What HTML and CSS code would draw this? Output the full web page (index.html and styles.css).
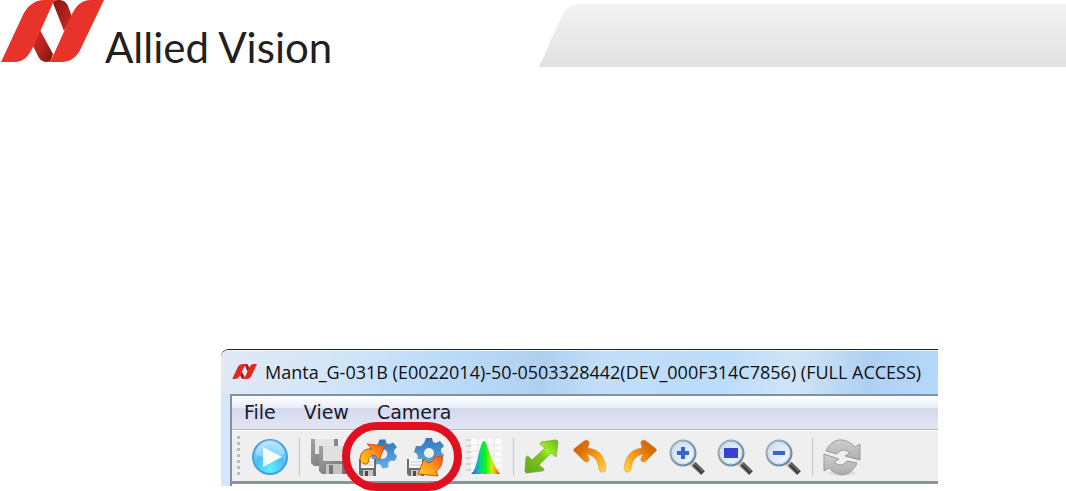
FILE: index.html
```html
<!DOCTYPE html>
<html lang="en">
<head>
  <meta charset="UTF-8" />
  <meta name="viewport" content="width=device-width, initial-scale=1.0"/>
  <title>Allied Vision</title>
  <link rel="stylesheet" href="styles.css">
</head>
<body>
  <!-- shared gradients and shapes for the toolbar icons -->
  <svg class="defs" width="0" height="0" aria-hidden="true">
    <defs>
      <radialGradient id="play" cx="50%" cy="85%" r="85%">
        <stop offset="0" stop-color="#5ff0ff"/><stop offset=".5" stop-color="#4cc0f6"/><stop offset="1" stop-color="#a5dcfa"/>
      </radialGradient>
      <linearGradient id="gear" x1="0" y1="0" x2="0" y2="1">
        <stop offset="0" stop-color="#2f77bd"/><stop offset="1" stop-color="#68aee8"/>
      </linearGradient>
      <linearGradient id="fire" x1="0" y1="1" x2="1" y2="0">
        <stop offset="0" stop-color="#ffd21c"/><stop offset=".5" stop-color="#ff9a1c"/><stop offset="1" stop-color="#f4511c"/>
      </linearGradient>
      <linearGradient id="rainbow">
        <stop offset="0" stop-color="#2a35c8"/><stop offset=".17" stop-color="#1a9ae0"/><stop offset=".35" stop-color="#00e070"/>
        <stop offset=".5" stop-color="#12f01c"/><stop offset=".72" stop-color="#d0ee10"/><stop offset=".85" stop-color="#ffa010"/><stop offset="1" stop-color="#b03020"/>
      </linearGradient>
      <linearGradient id="green" x1="0" y1="1" x2="1" y2="0">
        <stop offset="0" stop-color="#63a81c"/><stop offset=".5" stop-color="#82c41e"/><stop offset=".68" stop-color="#9cf01e"/><stop offset="1" stop-color="#68b020"/>
      </linearGradient>
      <linearGradient id="orange" x1="0" y1="0" x2="1" y2="1">
        <stop offset="0" stop-color="#c45a04"/><stop offset=".3" stop-color="#dc7208"/><stop offset=".6" stop-color="#fb9c12"/><stop offset="1" stop-color="#ffd750"/>
      </linearGradient>
      <linearGradient id="grey" x1="0" y1="0" x2="0" y2="1">
        <stop offset="0" stop-color="#cfcfcf"/><stop offset="1" stop-color="#adadad"/>
      </linearGradient>
      <linearGradient id="disk" x1="0" y1="0" x2="1" y2="1">
        <stop offset="0" stop-color="#a2a2a2"/><stop offset="1" stop-color="#707070"/>
      </linearGradient>
      <linearGradient id="lens" x1="0" y1="0" x2="1" y2="1">
        <stop offset="0" stop-color="#c5dafc"/><stop offset="1" stop-color="#f8fbff"/>
      </linearGradient>
      <linearGradient id="rim" x1="0" y1="0" x2="1" y2="1">
        <stop offset="0" stop-color="#a9b5c0"/><stop offset="1" stop-color="#64809c"/>
      </linearGradient>
      <linearGradient id="foldTop" x1="0" y1="0" x2="1" y2="1">
        <stop offset="0" stop-color="#851610"/><stop offset="1" stop-color="#d22c23"/>
      </linearGradient>
      <linearGradient id="foldBottom" x1="0" y1="0" x2="1" y2="1">
        <stop offset="0" stop-color="#d22c23"/><stop offset=".5" stop-color="#b7241c"/><stop offset="1" stop-color="#7c130e"/>
      </linearGradient>
      <symbol id="cog" viewBox="0 0 30 30">
        <g fill="url(#gear)">
          <path fill-rule="evenodd" d="M12 0h6l1 4 3 1 4-2 4 5-3 3 0 3 3 3-2 5-5 0-2 2 0 5-6 1-2-4-3-1-4 3-4-5 2-4-1-3-3-2 2-6 5 0 3-3zM15 10a5 5 0 1 0 0 10 5 5 0 0 0 0-10z"/>
        </g>
      </symbol>
      <symbol id="floppy" viewBox="0 0 17 17">
        <path d="M0 0h17v17H2l-2-2z" fill="#6c6c6c"/>
        <path d="M2 0h13v9H2z" fill="#f7f7f7"/>
        <path d="M3 3h11M3 6h11" stroke="#c8c8c8"/>
        <path d="M4 11h10v6H4z" fill="#c6c6c6"/>
        <path d="M6 12h3v5H6z" fill="#4c4c4c"/>
      </symbol>
      <symbol id="loupe" viewBox="0 0 36 36">
        <path d="M23 24l11 10" stroke="#bbb" stroke-width="6"/>
        <path d="M25 25l9 9" stroke="#444" stroke-width="5"/>
        <path d="M25 24l9 8" stroke="#8c8c8c" stroke-width="1"/>
        <circle cx="14" cy="14" r="12" fill="url(#lens)" stroke="url(#rim)" stroke-width="3"/>
        <circle cx="14" cy="14" r="11" fill="none" stroke="#dce8f4" stroke-width="1"/>
      </symbol>
      <symbol id="bend" viewBox="0 0 36 36">
        <path d="M11 2c3-2 6 0 5 3l-1 4c11 1 17 9 18 20 0 5-6 6-7 1-1-8-4-13-12-15l2 4c1 4-2 5-5 3L2 13c-2-1-2-3 0-4z" fill="url(#orange)" stroke="#b97a3a" stroke-opacity=".35"/>
      </symbol>
    </defs>
  </svg>

  <header class="header">
    <div class="brand">
      <svg class="brand-mark" width="104" height="62" viewBox="0 0 104 62" aria-hidden="true">
        <path d="M53 3c1-2 2-3 5-3 6 0 8 2 10 6l4 11-8 14z" fill="url(#foldTop)"/>
        <path d="M40 30l13 24c-1 5-3 8-6 8-5 0-8-3-10-8l-4-8z" fill="url(#foldBottom)"/>
        <path d="M1 62L22 17C27 6 34 0 45 0h13c-3 0-4 1-5 3L34 45c-5 11-10 17-20 17z" fill="#e8332a"/>
        <path d="M46 62c4 0 6-3 7-6l18-40C76 6 81 0 91 0h13L83 44c-5 12-11 18-22 18z" fill="#e8332a"/>
      </svg>
      <span class="brand-name">Allied Vision</span>
    </div>
    <div class="header-band"></div>
  </header>

  <main class="window">
    <div class="titlebar">
      <svg class="title-icon" width="25" height="15" viewBox="0 0 104 62" aria-hidden="true">
        <path d="M53 3c1-2 2-3 5-3 6 0 8 2 10 6l4 11-8 14z" fill="#a81d16"/>
        <path d="M40 30l13 24c-1 5-3 8-6 8-5 0-8-3-10-8l-4-8z" fill="#a81d16"/>
        <path d="M1 62L22 17C27 6 34 0 45 0h13L34 45c-5 11-10 17-20 17zM46 62c4 0 6-3 7-6l18-40C76 6 81 0 91 0h13L83 44c-5 12-11 18-22 18z" fill="#e02a20"/>
      </svg>
      <span class="title">Manta_G-031B (E0022014)-50-0503328442(DEV_000F314C7856) (FULL ACCESS)</span>
    </div>

    <div class="client">
      <nav class="menubar">
        <button type="button">File</button>
        <button type="button">View</button>
        <button type="button">Camera</button>
      </nav>

      <div class="toolbar">
        <span class="grip"></span>
        <button type="button" aria-label="Start acquisition">
          <svg viewBox="0 0 36 36">
            <circle cx="18" cy="18" r="17" fill="url(#play)" stroke="#499fdc" stroke-width="2"/>
            <path d="M4 15a14 14 0 0 1 28 0c-8 5-20 6-28 0z" fill="#fff" opacity=".3"/>
            <path d="M11 8l19 10-19 10z" fill="#f4fbf8"/>
          </svg>
        </button>
        <span class="separator"></span>
        <button type="button" aria-label="Save images" disabled>
          <svg viewBox="0 0 36 36">
            <path d="M0 0h27v27H3l-3-3z" fill="url(#disk)"/>
            <path d="M4 0h20v15H4z" fill="#e6e6e6"/>
            <path d="M23 0h3v7h-3z" fill="#888"/>
            <path d="M8 7h28v28H11l-3-3z" fill="url(#disk)"/>
            <path d="M12 7h20v15H12z" fill="#e0e0e0"/>
            <path d="M15 25h16v10H15z" fill="#c3c3c3"/>
            <path d="M18 26h4v9h-4z" fill="#777"/>
          </svg>
        </button>
        <button type="button" aria-label="Load camera settings">
          <svg viewBox="0 0 36 36">
            <use href="#cog" x="9" y="-1" width="29" height="32"/>
            <use href="#floppy" x="0" y="20" width="17" height="17"/>
            <path d="M1 21C1 13 6 9 13 10L8 5l18 2-6 14-4-5c-5 0-6 3-7 8-2 2-6 1-8-3z" fill="url(#fire)" stroke="#c65216"/>
          </svg>
        </button>
        <button type="button" aria-label="Save camera settings">
          <svg viewBox="0 0 36 36">
            <use href="#cog" x="7" y="-1" width="30" height="30"/>
            <use href="#floppy" x="0" y="20" width="17" height="17"/>
            <path d="M28 17c2 1 4 1 7 0 1 7-1 12-6 15l2 5-20-2 6-15 4 4c4-1 6-3 7-7z" fill="url(#fire)" stroke="#c65216"/>
          </svg>
        </button>
        <span class="separator"></span>
        <button type="button" aria-label="Histogram">
          <svg viewBox="0 0 36 36">
            <path d="M5 0h31v35H5z" fill="#fafafa"/>
            <path d="M5 6h31M5 12h31M5 18h31M5 24h31M5 30h31M12 0v35M20 0v35M28 0v35" stroke="#e6e6e6"/>
            <path d="M0 1h5M0 7h5M0 13h5M0 19h5M0 25h5M0 31h5" stroke="#bbb"/>
            <path d="M5 35c4-3 5-9 7-17 2-9 4-16 6-16s3 6 6 13c3 8 6 15 10 20z" fill="url(#rainbow)"/>
          </svg>
        </button>
        <span class="separator"></span>
        <button type="button" aria-label="Fit to window">
          <svg viewBox="0 0 36 36">
            <path d="M16 3l15-2c1 0 2 1 2 2l-2 15-5-4-12 12 5 4c0 1 0 2-2 2l-15 2c-1 0-2-1-2-2l1-14c1-1 2-1 3 0l3 3L20 9l-5-4z" fill="url(#green)" stroke="#649c22" stroke-opacity=".6"/>
          </svg>
        </button>
        <button type="button" aria-label="Rotate left">
          <svg viewBox="0 0 36 36"><use href="#bend"/></svg>
        </button>
        <button type="button" aria-label="Rotate right">
          <svg class="flip" viewBox="0 0 36 36"><use href="#bend"/></svg>
        </button>
        <button type="button" aria-label="Zoom in">
          <svg viewBox="0 0 36 36">
            <use href="#loupe"/>
            <path d="M14 8v12M8 14h12" stroke="#3864cc" stroke-width="4"/>
          </svg>
        </button>
        <button type="button" aria-label="Original size">
          <svg viewBox="0 0 36 36">
            <use href="#loupe"/>
            <path d="M7 9h14v10H7z" fill="#3a42d0"/>
          </svg>
        </button>
        <button type="button" aria-label="Zoom out">
          <svg viewBox="0 0 36 36">
            <use href="#loupe"/>
            <path d="M8 14h12" stroke="#3864cc" stroke-width="4"/>
          </svg>
        </button>
        <span class="separator"></span>
        <button type="button" aria-label="Refresh" disabled>
          <svg viewBox="0 0 36 36">
            <ellipse cx="18" cy="34" rx="14" ry="3" fill="#ddd"/>
            <g fill="url(#grey)" stroke="#999">
              <path d="M2 12C8-2 22-2 31 8l5-3v16l-15-4 5-3c-5-4-9-4-13 1z"/>
              <path d="M33 24C27 38 14 39 5 29l-5 3V15l15 5-5 3c5 4 9 4 13-1z"/>
            </g>
          </svg>
        </button>
        <!-- marks the load/save settings buttons -->
        <span class="highlight"></span>
      </div>
    </div>
  </main>
</body>
</html>
```
FILE: styles.css
```css
* {
  box-sizing: border-box;
}
body {
  margin: 0;
  min-height: 100vh;
  background: #fff;
  font-family: "Open Sans", "Noto Sans", sans-serif;
}
.defs {
  position: absolute;
}
button {
  padding: 0;
  border: none;
  background: none;
  font: inherit;
  color: inherit;
}

/* page header */
.header {
  display: flex;
  align-items: flex-start;
}
.brand {
  display: flex;
  align-items: flex-start;
  gap: 1px;
  flex: 0 0 539px;
}
.brand-mark {
  flex: none;
}
.brand-name {
  padding-top: 20px;
  font-family: Lato, sans-serif;
  font-size: 42px;
  line-height: 54px;
  color: #231f20;
  white-space: nowrap;
}
.header-band {
  flex: 1;
  height: 63px;
  margin-top: 4px;
  background: linear-gradient(#f2f2f2, #e2e2e2);
  clip-path: polygon(0 100%, 12px 36px, 25px 8px, 29px 4px, 34px 1px, 40px 0, 100% 0, 100% 100%);
}

/* application window */
.window {
  margin: 275px 128px 0 221px;
  border-top: 1px solid #1c2430;
  border-top-left-radius: 8px;
  background: #d5e8fb;
}
.titlebar {
  display: flex;
  align-items: center;
  gap: 8px;
  height: 44px;
  padding: 0 0 2px 11px;
  border-top: 1px solid #eef6ff;
  border-top-left-radius: 8px;
  background: linear-gradient(100deg, #e0eaf5 0%, #d5e6f8 14%, #bddcfa 30%, #b0d0f0 45%, #c2def8 53%, #bcdcfc 70%, #d0e4f6 80%, #aed0f3 90%, #b6d8fa 100%);
}
.title-icon {
  flex: none;
}
.title {
  font-size: 18px;
  line-height: 24px;
  color: #101010;
  white-space: nowrap;
}
.client {
  margin-left: 9px;
  border-top: 2px solid #7f91a6;
  border-left: 2px solid #7f91a6;
  background: #efefef;
}
.menubar {
  display: flex;
  align-items: center;
  gap: 28px;
  height: 34px;
  padding: 0 0 1px 12px;
  border-bottom: 1px solid #b3b7cb;
  background: linear-gradient(#fff, #e9ecf6 36%, #d4d9eb 37%, #e2e6f5);
  font-family: "DejaVu Sans", Verdana, sans-serif;
  font-size: 19px;
  line-height: 24px;
  color: #1a1a2a;
}
.toolbar {
  position: relative;
  display: flex;
  align-items: center;
  gap: 12px;
  height: 56px;
  padding: 0 0 1px 5px;
  border-top: 1px solid #fff;
  border-bottom: 2px solid #fff;
  box-shadow: inset 0 -3px #8c9299;
}
.toolbar button {
  flex: none;
  width: 36px;
  height: 36px;
}
.toolbar svg {
  display: block;
  width: 36px;
  height: 36px;
  overflow: visible;
}
.toolbar .flip {
  transform: scaleX(-1);
}
.grip {
  width: 3px;
  height: 42px;
  background: repeating-linear-gradient(#bcbcbc 0 3px, transparent 3px 6px);
}
.separator {
  width: 3px;
  height: 38px;
  margin: 0 -2px;
  border: solid #e9e9e9;
  border-width: 0 1px;
  background: #cdcdcd;
}
.highlight {
  position: absolute;
  top: -9px;
  left: 110px;
  width: 120px;
  height: 69px;
  border: 8px solid #e01020;
  border-radius: 35px;
}
```
